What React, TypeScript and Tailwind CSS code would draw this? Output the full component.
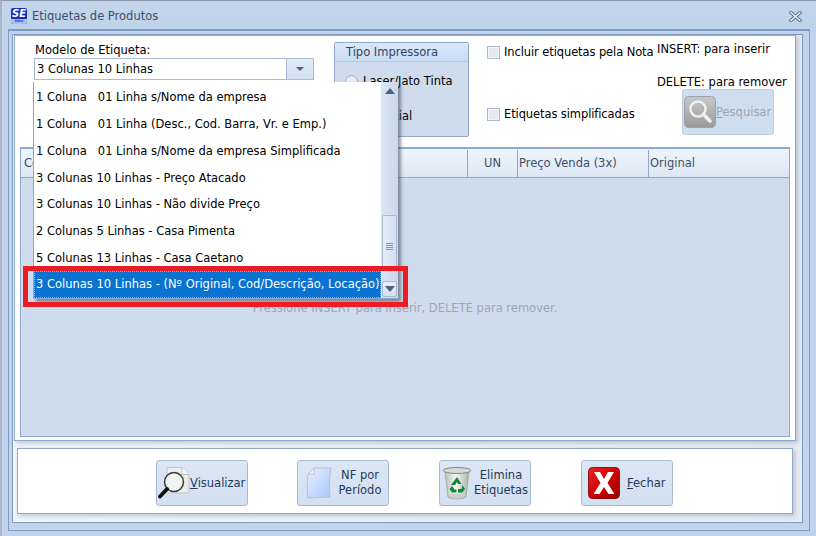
import React from "react";

const font = { fontFamily: '"DejaVu Sans", "Noto Sans", sans-serif' };

function Logo() {
  return (
    <div className="w-[16px] h-[16px] bg-[#1c2fc4] rounded-[2px] flex flex-col items-center overflow-hidden mr-[5px]">
      <span className="text-white font-bold italic text-[10px] leading-[11px]">SE</span>
      <span className="bg-[#9fc4f0] w-full text-center text-[#1c2fc4] font-bold text-[3px] leading-[5px]">MAIS</span>
    </div>
  );
}

function CloseGlyph() {
  return (
    <svg width="13" height="11" viewBox="0 0 13 11">
      <path d="M2 1.5 L11 9.5 M11 1.5 L2 9.5" stroke="#5f6f86" strokeWidth="3.4" strokeLinecap="square" />
      <path d="M2 1.5 L11 9.5 M11 1.5 L2 9.5" stroke="#f2f5f9" strokeWidth="1.4" strokeLinecap="square" />
    </svg>
  );
}

function Check({ label }: { label: string }) {
  return (
    <div className="flex items-center h-[14px]">
      <span className="w-[13px] h-[13px] border border-[#a9b9d2] bg-[#e6e8ec] shadow-[inset_0_0_0_1px_#f2f4f7] mr-[4px] shrink-0" />
      <span className="text-black whitespace-nowrap tracking-[-0.1px]">{label}</span>
    </div>
  );
}

function MagnifierPesquisar() {
  return (
    <svg width="32" height="32" viewBox="0 0 32 32">
      <defs>
        <linearGradient id="gp" x1="0" y1="0" x2="0" y2="1">
          <stop offset="0" stopColor="#c8c8c8" />
          <stop offset="1" stopColor="#9a9a9a" />
        </linearGradient>
      </defs>
      <rect x="0.5" y="0.5" width="31" height="31" rx="4" fill="url(#gp)" stroke="#9aa4b0" />
      <circle cx="14" cy="13" r="7.5" fill="none" stroke="#eef1f4" strokeWidth="2.4" />
      <path d="M19.5 18.5 L26 25" stroke="#eef1f4" strokeWidth="3.6" strokeLinecap="round" />
    </svg>
  );
}

function MagnifierDoc() {
  return (
    <svg width="32" height="32" viewBox="0 0 32 32">
      <path d="M9 0.5 H24 L31 7.5 V26 H9 Z" fill="#ececec" stroke="#c4c4c4" />
      <path d="M24 0.5 V7.5 H31" fill="#f8f8f8" stroke="#bdbdbd" />
      <circle cx="16" cy="15" r="9.5" fill="#f4f6f6" fillOpacity="0.75" stroke="#3a3a3a" strokeWidth="1.5" />
      <path d="M9 22 L2 29.5" stroke="#111" strokeWidth="3.8" strokeLinecap="round" />
    </svg>
  );
}

function DocBlue() {
  return (
    <svg width="26" height="32" viewBox="0 0 26 32">
      <defs>
        <linearGradient id="gd" x1="0" y1="0" x2="1" y2="1">
          <stop offset="0" stopColor="#e6efff" />
          <stop offset="1" stopColor="#a9c8fa" />
        </linearGradient>
      </defs>
      <path d="M8 1 L25 1 C23 10 23 22 24 30 L2 31 C1 24 1 15 2 7 Z" fill="url(#gd)" stroke="#b4c2d6" />
      <path d="M8 1 L8 7 L2 7 Z" fill="#f4f6fa" stroke="#b4c2d6" />
    </svg>
  );
}

function Trash() {
  return (
    <svg width="30" height="34" viewBox="0 0 30 34">
      <defs>
        <linearGradient id="gt" x1="0" y1="0" x2="1" y2="0">
          <stop offset="0" stopColor="#b9c0bb" />
          <stop offset="0.45" stopColor="#f4f6f4" />
          <stop offset="1" stopColor="#aab2ac" />
        </linearGradient>
      </defs>
      <path d="M3 5 L6 31 C10 33.5 20 33.5 24 31 L27 5 Z" fill="url(#gt)" stroke="#a4aca6" />
      <ellipse cx="15" cy="4.5" rx="14" ry="3" fill="#d8dcd9" stroke="#7f8a84" />
      <ellipse cx="15" cy="30" rx="8" ry="2.5" fill="#c9cfcb" />
      <path d="M15 11 L19.5 18 H16 L15 16 L13 19 H9 Z M20.5 19 L23 23 L20 26.5 H16 V23 H19.5 Z M10 20 L12.5 23.5 H14.5 V26.5 H10 L7.5 23 Z" fill="#128a35" />
    </svg>
  );
}

function RedX() {
  return (
    <svg width="32" height="32" viewBox="0 0 32 32">
      <defs>
        <linearGradient id="gx" x1="0" y1="0" x2="1" y2="1">
          <stop offset="0" stopColor="#f02020" />
          <stop offset="0.6" stopColor="#c80000" />
          <stop offset="1" stopColor="#8e0000" />
        </linearGradient>
      </defs>
      <rect x="0.5" y="0.5" width="31" height="31" rx="4" fill="url(#gx)" stroke="#8f1010" />
      <path d="M6 5 H12 L16 12 L20 5 H26 L19.5 16 L26.5 27 H20.5 L16 20 L11.5 27 H5.5 L12.5 16 Z" fill="#fff" />
    </svg>
  );
}

function ActionButton({ icon, children, first }: { icon: React.ReactNode; children: React.ReactNode; first?: boolean }) {
  return (
    <div className={`w-[92px] h-[46px] rounded-[3px] border border-[#a9bad3] bg-gradient-to-b from-[#dce7f5] to-[#d3e0f1] flex items-center text-[#1e395b] leading-[15px] ${first ? "-mr-px" : ""}`}>
      {icon}
      {children}
    </div>
  );
}

const items = [
  "1 Coluna   01 Linha s/Nome da empresa",
  "1 Coluna   01 Linha (Desc., Cod. Barra, Vr. e Emp.)",
  "1 Coluna   01 Linha s/Nome da empresa Simplificada",
  "3 Colunas 10 Linhas - Preço Atacado",
  "3 Colunas 10 Linhas - Não divide Preço",
  "2 Colunas 5 Linhas - Casa Pimenta",
  "5 Colunas 13 Linhas - Casa Caetano",
];

function Dropdown() {
  return (
    <div className="absolute left-[18px] top-[46px] w-[365px] h-[217px] bg-white border-l border-b border-[#8fa5c6] flex shadow-[3px_3px_3px_rgba(60,70,90,0.55)]">
      <div className="w-[347px] flex flex-col pt-[1px]">
        {items.map((t) => (
          <div key={t} className="h-[27px] flex items-center pl-[2px] text-black whitespace-pre translate-y-[1px]">{t}</div>
        ))}
        <div className="h-[27px] flex items-center pl-[1px] mt-auto bg-[#0a72d0] text-white border border-dotted border-[#f0a040] whitespace-pre">
          3 Colunas 10 Linhas - (Nº Original, Cod/Descrição, Locação)
        </div>
      </div>
      <div className="flex-1 bg-gradient-to-r from-[#dbe6f4] to-[#c9d8ec] flex flex-col items-center relative">
        <svg width="10" height="6" viewBox="0 0 10 6" className="mt-[6px]"><path d="M5 0 L10 6 H0 Z" fill="#4d6185" /></svg>
        <div className="mt-[121px] w-[15px] h-[56px] border border-[#a6b9d3] rounded-[2px] bg-gradient-to-r from-[#e6eef8] to-[#d3e0f1] flex flex-col items-center justify-center gap-[1px] pt-[6px]">
          <span className="w-[7px] h-px bg-[#7f93b2]" />
          <span className="w-[7px] h-px bg-[#7f93b2]" />
          <span className="w-[7px] h-px bg-[#7f93b2]" />
          <span className="w-[7px] h-px bg-[#7f93b2]" />
        </div>
        <div className="mt-auto mb-[1px] w-[15px] h-[16px] border border-[#a6b9d3] rounded-[2px] bg-gradient-to-b from-[#eaf1f9] to-[#d3e0f1] flex items-center justify-center">
          <svg width="10" height="6" viewBox="0 0 10 6"><path d="M5 6 L10 0 H0 Z" fill="#4d6185" /></svg>
        </div>
      </div>
    </div>
  );
}

export default function App() {
  return (
    <div className="w-[816px] h-[536px] overflow-hidden bg-[#c0d3ea] text-[11.5px] leading-[15px] flex flex-col border-t border-t-[#8a97aa] border-l-2 border-l-[#aab4c4]" style={font}>
      {/* title bar */}
      <div className="h-[28px] flex items-center pl-[9px] pr-[14px] pt-[2px] shrink-0 bg-gradient-to-b from-[#c4d6ec] to-[#bed2e9]">
        <Logo />
        <span className="text-[#3c4f69]">Etiquetas de Produtos</span>
        <span className="ml-auto flex"><CloseGlyph /></span>
      </div>

      {/* outer frame */}
      <div className="ml-[6px] w-[802px] h-[502px] border border-[#7f9bc4] border-t-2 pl-[3px] pr-[6px] pt-[3px] pb-[7px] shrink-0">
        <div className="w-full h-full border border-[#7f9bc4] bg-gradient-to-r from-[#f1f4f9] to-[#e6ebf2] flex flex-col pl-[1px]">
          {/* upper panel */}
          <div className="relative w-[782px] h-[406px] bg-white border border-[#8fa9cc] shadow-[2px_2px_4px_rgba(120,130,150,0.4)] flex flex-col shrink-0">
            <div className="h-[111px] flex shrink-0 pl-[19px]">
              <div className="w-[280px] pt-[7px]">
                <div className="text-black pl-[1px] h-[15px]">Modelo de Etiqueta:</div>
                <div className="h-[22px] border border-[#a9bcd7] flex bg-white">
                  <div className="flex-1 pl-[2px] pt-[1px] flex items-center text-black">3 Colunas 10 Linhas</div>
                  <div className="w-[27px] border-l border-[#a9bcd7] bg-gradient-to-b from-[#e3ecf8] to-[#d1dff0] flex items-center justify-center">
                    <svg width="8" height="4" viewBox="0 0 8 4"><path d="M0 0 H8 L4 4 Z" fill="#4d6185" /></svg>
                  </div>
                </div>
              </div>

              <div className="ml-[20px] mt-[6px] w-[135px] h-[95px] rounded-[2px] border border-[#8fa9cc] bg-[#cfdcee] shrink-0">
                <div className="h-[19px] border-b border-[#b4c8e2] bg-gradient-to-b from-[#dce8f8] to-[#c8dbf3] flex items-center pl-[11px] text-[#2f4563]">Tipo Impressora</div>
                <div className="pl-[10px] pt-[12px] text-black">
                  <div className="flex items-center h-[15px]">
                    <span className="w-[13px] h-[13px] rounded-full border border-[#9aa8bc] bg-[#e8ebef] mr-[5px]" />
                    Laser/Jato Tinta
                  </div>
                  <div className="flex items-center h-[15px] mt-[20px]">
                    <span className="w-[13px] h-[13px] rounded-full border border-[#9aa8bc] bg-[#e8ebef] mr-[5px]" />
                    Matricial
                  </div>
                </div>
              </div>

              <div className="ml-[18px] w-[170px] pt-[9px] shrink-0">
                <Check label="Incluir etiquetas pela Nota" />
                <div className="mt-[48px]"><Check label="Etiquetas simplificadas" /></div>
              </div>

              <div className="w-[130px] pt-[6px] shrink-0 text-black">
                <div className="h-[15px] whitespace-nowrap">INSERT: para inserir</div>
                <div className="h-[15px] mt-[18px] whitespace-nowrap">DELETE: para remover</div>
                <div className="ml-[25px] -mt-[1px] w-[92px] h-[46px] rounded-[3px] border border-[#bccde2] bg-[#cfdeee] flex items-center pl-[1px] text-[#98a6b6]">
                  <MagnifierPesquisar />
                  <span><span className="underline">P</span>esquisar</span>
                </div>
              </div>
            </div>

            {/* grid */}
            <div className="mx-[5px] h-[290px] border border-[#8fa9cc] border-t-2 bg-[#cfdcee] flex flex-col">
              <div className="h-[29px] pt-[1px] border-b border-[#8fa9cc] bg-gradient-to-b from-[#eef4fb] to-[#dde8f5] flex items-center text-[#3b4f69] shrink-0">
                <div className="w-[447px] pl-[3px] h-full flex items-center border-r border-[#8fa9cc] overflow-hidden">Código</div>
                <div className="w-[50px] h-full flex items-center justify-center border-r border-[#8fa9cc]">UN</div>
                <div className="w-[131px] pl-[1px] h-full flex items-center border-r border-[#8fa9cc]">Preço Venda (3x)</div>
                <div className="flex-1 pl-[1px] h-full flex items-center">Original</div>
              </div>
              <div className="flex-1 flex items-center justify-center text-[#9ba7b6] pt-[2px]">
                Pressione INSERT para inserir, DELETE para remover.
              </div>
            </div>

            <Dropdown />
            {/* highlight */}
            <div className="absolute left-[8px] top-[230px] w-[385px] h-[41px] border-[5px] border-[#ed1c24]" />
          </div>

          {/* lower panel */}
          <div className="ml-[3px] mt-[7px] w-[776px] h-[66px] bg-white border border-[#8fa9cc] shadow-[2px_2px_4px_rgba(120,130,150,0.4)] flex items-center pl-[138px] pt-[4px] gap-[50px] shrink-0">
            <ActionButton first icon={<span className="ml-[1px] flex"><MagnifierDoc /></span>}>
              <span><span className="underline">V</span>isualizar</span>
            </ActionButton>
            <ActionButton icon={<span className="ml-[8px] flex"><DocBlue /></span>}>
              <span className="text-center flex-1">NF por<br />Período</span>
            </ActionButton>
            <ActionButton icon={<span className="ml-[2px] flex"><Trash /></span>}>
              <span className="text-center flex-1">Elimina<br />Etiquetas</span>
            </ActionButton>
            <ActionButton icon={<span className="ml-[6px] flex"><RedX /></span>}>
              <span className="ml-[7px]"><span className="underline">F</span>echar</span>
            </ActionButton>
          </div>
        </div>
      </div>
    </div>
  );
}
